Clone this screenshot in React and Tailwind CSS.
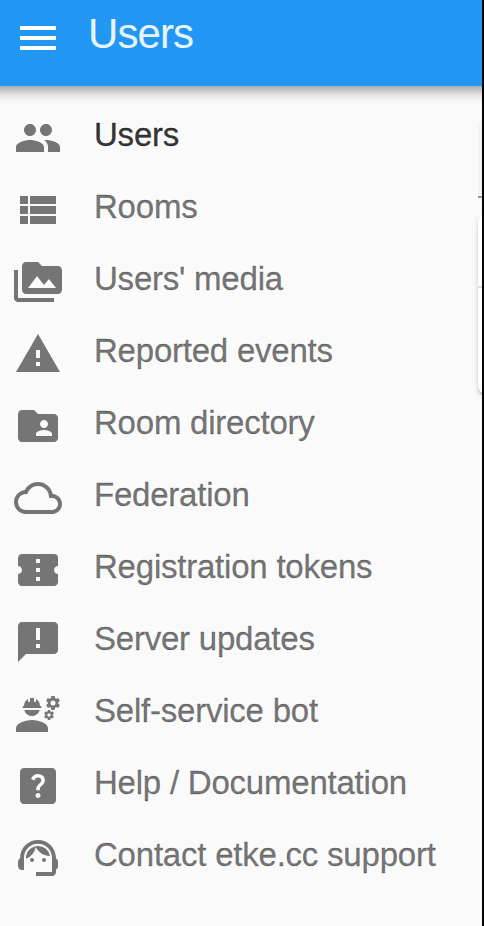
import {
  MdMenu, MdGroup, MdPermMedia, MdWarning, MdFolderShared, MdCloudQueue,
  MdConfirmationNumber, MdAnnouncement, MdEngineering, MdHelpCenter, MdSupportAgent,
} from 'react-icons/md';

function ViewList({ className }) {
  return (
    <svg viewBox="0 0 24 24" fill="currentColor" className={className}>
      <path d="M3 14h4v-4H3zm0 5h4v-4H3zM3 9h4V5H3zm5 5h13v-4H8zm0 5h13v-4H8zM8 5v4h13V5z" />
    </svg>
  );
}

const items = [
  { label: 'Users', Icon: MdGroup, active: true },
  { label: 'Rooms', Icon: ViewList },
  { label: "Users' media", Icon: MdPermMedia },
  { label: 'Reported events', Icon: MdWarning },
  { label: 'Room directory', Icon: MdFolderShared },
  { label: 'Federation', Icon: MdCloudQueue },
  { label: 'Registration tokens', Icon: MdConfirmationNumber },
  { label: 'Server updates', Icon: MdAnnouncement },
  { label: 'Self-service bot', Icon: MdEngineering },
  { label: 'Help / Documentation', Icon: MdHelpCenter },
  { label: 'Contact etke.cc support', Icon: MdSupportAgent },
];

export default function App() {
  return (
    <div className="flex h-[926px] w-[484px] overflow-hidden border-r-2 border-black bg-[#fafafa] font-['Liberation_Sans',Arial,sans-serif]">
      <div className="flex min-w-0 flex-1 flex-col">
        <header className="z-10 -mx-6 flex h-[86px] shrink-0 items-start bg-[#2196f3] pl-[38px] pt-3.5 text-white shadow-[0_4px_8px_-2px_rgba(0,0,0,0.2),0_8px_10px_0_rgba(0,0,0,0.14),0_2px_20px_0_rgba(0,0,0,0.12)]">
          <button aria-label="Open menu" className="size-12">
            <MdMenu className="size-12" />
          </button>
          <h1 className="-mt-2.5 ml-[26px] text-[42px] leading-[60px] tracking-[-0.9px] text-white/90">Users</h1>
        </header>
        <div className="flex flex-1">
          <nav className="w-[478px] shrink-0 pt-4">
            {items.map(({ label, Icon, active }) => (
              <a
                key={label}
                className={`flex h-[72px] items-start pl-3.5 pt-3 ${active ? 'text-black/80' : 'text-black/55'}`}
              >
                <Icon className="size-12 shrink-0 text-[#757575]" />
                <span className="-mt-[3px] ml-8 whitespace-nowrap text-[33px] leading-[48px] tracking-[-0.22px] [-webkit-text-stroke:0.3px_currentColor]">{label}</span>
              </a>
            ))}
          </nav>
          <main className="w-10 shrink-0 pt-[33px]">
            <div className="h-[79px] rounded-tl-lg border-b-2 border-[#949494] bg-[#f2f2f2]" />
            <div className="mt-4 h-[180px] rounded-lg bg-white shadow-[0_4px_2px_-2px_rgba(0,0,0,0.2),0_2px_2px_0_rgba(0,0,0,0.14),0_2px_6px_0_rgba(0,0,0,0.12)]">
              <div className="h-[74px] border-b-2 border-[#e0e0e0]" />
            </div>
          </main>
        </div>
      </div>
    </div>
  );
}
